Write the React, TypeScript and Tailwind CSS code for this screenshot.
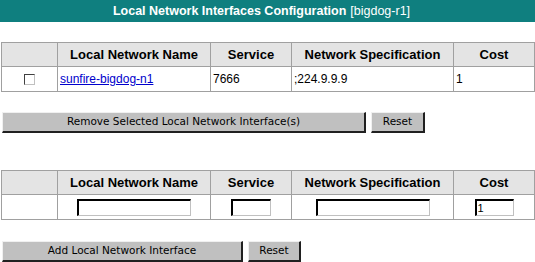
import React from 'react'

const th = "border border-[#a0a0a0] bg-[#e4e4e4] h-[24px] text-center font-bold text-[13px] text-black"
const td = "border border-[#a0a0a0] h-[25px] px-[2px] text-[12px] text-black"
const btn = "h-[21px] bg-[#c0c0c0] border-t border-l border-t-[#f0f0f0] border-l-[#f0f0f0] border-b-2 border-r-2 border-b-[#202020] border-r-[#202020] text-[10.5px] text-black font-['DejaVu_Sans',sans-serif]"
const field = "h-[17px] bg-white text-black border-t-2 border-l-2 border-t-black border-l-black border-b border-r border-b-[#c0c0c0] border-r-[#c0c0c0] text-[11px] px-[1px] align-middle"

function Cols() {
  return (
    <colgroup>
      <col className="w-[56px]" />
      <col className="w-[153px]" />
      <col className="w-[81px]" />
      <col className="w-[162px]" />
      <col className="w-[81px]" />
    </colgroup>
  )
}

function Head() {
  return (
    <thead>
      <tr>
        <th className={th}></th>
        <th className={th}>Local Network Name</th>
        <th className={th}>Service</th>
        <th className={th}>Network Specification</th>
        <th className={th}>Cost</th>
      </tr>
    </thead>
  )
}

export default function App() {
  return (
    <div className="w-[535px] h-[262px] bg-white overflow-hidden font-['Liberation_Sans',Arial,sans-serif]">
      <div className="h-[22px] bg-[#0f7f7f] flex items-center justify-center pr-[12px] text-white text-[12.5px]">
        <span className="font-bold">Local Network Interfaces Configuration</span>
        <span className="ml-[4px]">[bigdog-r1]</span>
      </div>

      <table className="mt-[20px] ml-px w-[533px] table-fixed border-collapse border border-[#a0a0a0]">
        <Cols />
        <Head />
        <tbody>
          <tr>
            <td className={td + " text-center"}>
              <span className="inline-block w-[11px] h-[11px] align-middle bg-white border-t border-l border-t-[#404040] border-l-[#404040] border-b border-r border-b-[#c0c0c0] border-r-[#c0c0c0]"></span>
            </td>
            <td className={td}>
              <a href="#" className="text-[#0000cc] underline">sunfire-bigdog-n1</a>
            </td>
            <td className={td}>7666</td>
            <td className={td}>;224.9.9.9</td>
            <td className={td}>1</td>
          </tr>
        </tbody>
      </table>

      <div className="mt-[20px] ml-[2px] flex gap-[5px]">
        <button className={btn + " w-[364px]"}>Remove Selected Local Network Interface(s)</button>
        <button className={btn + " w-[54px]"}>Reset</button>
      </div>

      <table className="mt-[37px] ml-px w-[533px] table-fixed border-collapse border border-[#a0a0a0]">
        <Cols />
        <Head />
        <tbody>
          <tr>
            <td className={td}></td>
            <td className={td + " text-center"}>
              <input className={field + " w-[114px]"} />
            </td>
            <td className={td + " text-center"}>
              <input className={field + " w-[40px]"} />
            </td>
            <td className={td + " text-center"}>
              <input className={field + " w-[114px]"} />
            </td>
            <td className={td + " text-center"}>
              <input className={field + " w-[39px]"} defaultValue="1" />
            </td>
          </tr>
        </tbody>
      </table>

      <div className="mt-[21px] ml-[2px] flex gap-[5px]">
        <button className={btn + " w-[241px]"}>Add Local Network Interface</button>
        <button className={btn + " w-[53px]"}>Reset</button>
      </div>
    </div>
  )
}
